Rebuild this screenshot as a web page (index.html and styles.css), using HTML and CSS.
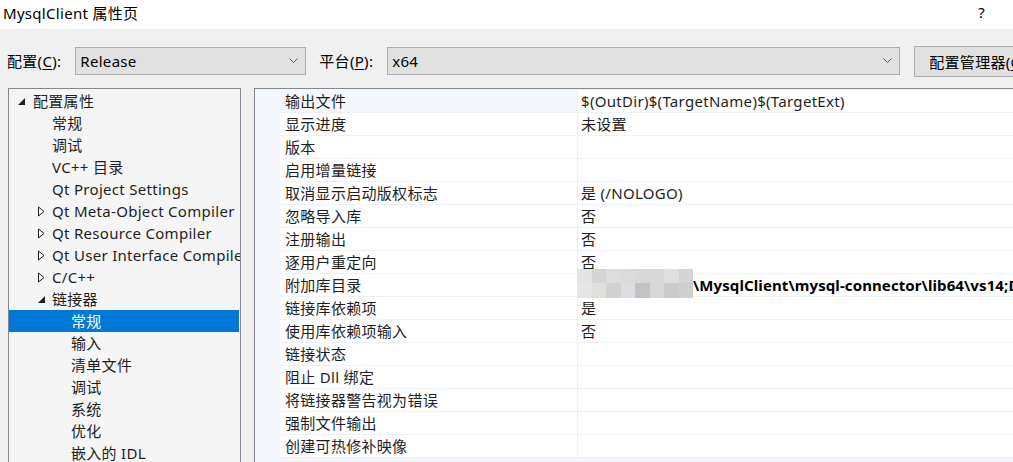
FILE: index.html
```html
<!DOCTYPE html>
<html lang="zh-CN">
<head>
<meta charset="utf-8">
<title>MysqlClient 属性页</title>
<link rel="stylesheet" href="styles.css">
</head>
<body>
<div class="dialog">
  <div class="titlebar">
    <span class="title">MysqlClient 属性页</span>
    <span class="help">?</span>
  </div>
  <div class="toolbar">
    <span class="label">配置(<u>C</u>):</span>
    <div class="combo combo-config"><span>Release</span><svg class="chev" width="9" height="6" viewBox="0 0 9 6"><path d="M0.5 0.5 L4.5 4.5 L8.5 0.5" fill="none" stroke="#555" stroke-width="1"/></svg></div>
    <span class="label label-platform">平台(<u>P</u>):</span>
    <div class="combo combo-platform"><span>x64</span><svg class="chev" width="9" height="6" viewBox="0 0 9 6"><path d="M0.5 0.5 L4.5 4.5 L8.5 0.5" fill="none" stroke="#555" stroke-width="1"/></svg></div>
    <div class="button">配置管理器(<u>O</u>)...</div>
  </div>
  <div class="main">
    <div class="tree">
      <div class="node l0"><svg class="exp" width="9" height="9" viewBox="0 0 9 9"><path d="M8 1 L8 8 L1 8 Z" fill="#1e1e1e"/></svg>配置属性</div>
      <div class="node l1"><span class="noexp"></span>常规</div>
      <div class="node l1"><span class="noexp"></span>调试</div>
      <div class="node l1"><span class="noexp"></span>VC++ 目录</div>
      <div class="node l1"><span class="noexp"></span>Qt Project Settings</div>
      <div class="node l1"><svg class="exp" width="9" height="11" viewBox="0 0 9 11"><path d="M1.5 1 L7 5.5 L1.5 10 Z" fill="none" stroke="#1e1e1e" stroke-width="1"/></svg>Qt Meta-Object Compiler</div>
      <div class="node l1"><svg class="exp" width="9" height="11" viewBox="0 0 9 11"><path d="M1.5 1 L7 5.5 L1.5 10 Z" fill="none" stroke="#1e1e1e" stroke-width="1"/></svg>Qt Resource Compiler</div>
      <div class="node l1"><svg class="exp" width="9" height="11" viewBox="0 0 9 11"><path d="M1.5 1 L7 5.5 L1.5 10 Z" fill="none" stroke="#1e1e1e" stroke-width="1"/></svg>Qt User Interface Compiler</div>
      <div class="node l1"><svg class="exp" width="9" height="11" viewBox="0 0 9 11"><path d="M1.5 1 L7 5.5 L1.5 10 Z" fill="none" stroke="#1e1e1e" stroke-width="1"/></svg>C/C++</div>
      <div class="node l1"><svg class="exp" width="9" height="9" viewBox="0 0 9 9"><path d="M8 1 L8 8 L1 8 Z" fill="#1e1e1e"/></svg>链接器</div>
      <div class="node l2 selected"><span class="noexp"></span>常规</div>
      <div class="node l2"><span class="noexp"></span>输入</div>
      <div class="node l2"><span class="noexp"></span>清单文件</div>
      <div class="node l2"><span class="noexp"></span>调试</div>
      <div class="node l2"><span class="noexp"></span>系统</div>
      <div class="node l2"><span class="noexp"></span>优化</div>
      <div class="node l2"><span class="noexp"></span>嵌入的 IDL</div>
    </div>
    <div class="grid">
      <div class="row current"><div class="name">输出文件</div><div class="value">$(OutDir)$(TargetName)$(TargetExt)</div></div>
      <div class="row"><div class="name">显示进度</div><div class="value">未设置</div></div>
      <div class="row"><div class="name">版本</div><div class="value"></div></div>
      <div class="row"><div class="name">启用增量链接</div><div class="value"></div></div>
      <div class="row"><div class="name">取消显示启动版权标志</div><div class="value">是 (/NOLOGO)</div></div>
      <div class="row"><div class="name">忽略导入库</div><div class="value">否</div></div>
      <div class="row"><div class="name">注册输出</div><div class="value">否</div></div>
      <div class="row"><div class="name">逐用户重定向</div><div class="value">否</div></div>
      <div class="row"><div class="name">附加库目录</div><div class="value blurred"><div class="blur"><i style="background:#e3e3e3"></i><i style="background:#d2d4d6"></i><i style="background:#dcdcdc"></i><i style="background:#dadada"></i><i style="background:#d8d8d8"></i><i style="background:#d6d8da"></i><i style="background:#dfdfdf"></i><i style="background:#d4d4d4"></i><i style="background:#e6e6e6"></i><i style="background:#e0dedb"></i><i style="background:#d0d1d3"></i><i style="background:#dcdde0"></i><i style="background:#c2c2c2"></i><i style="background:#d6d7d8"></i><i style="background:#cacbcd"></i><i style="background:#cfcfcf"></i></div><b>\MysqlClient\mysql-connector\lib64\vs14;D:\</b></div></div>
      <div class="row"><div class="name">链接库依赖项</div><div class="value">是</div></div>
      <div class="row"><div class="name">使用库依赖项输入</div><div class="value">否</div></div>
      <div class="row"><div class="name">链接状态</div><div class="value"></div></div>
      <div class="row"><div class="name">阻止 Dll 绑定</div><div class="value"></div></div>
      <div class="row"><div class="name">将链接器警告视为错误</div><div class="value"></div></div>
      <div class="row"><div class="name">强制文件输出</div><div class="value"></div></div>
      <div class="row"><div class="name">创建可热修补映像</div><div class="value"></div></div>
    </div>
  </div>
</div>
</body>
</html>
```
FILE: styles.css
```css
* { box-sizing: border-box; }
html, body {
  margin: 0;
  padding: 0;
  width: 1013px;
  height: 462px;
  overflow: hidden;
  background: #f0f0f0;
}
body {
  font-family: "Noto Sans", "Noto Sans CJK SC", sans-serif;
  font-size: 15px;
  letter-spacing: 0.3px;
  color: #1e1e1e;
}
.dialog {
  display: flex;
  flex-direction: column;
  width: 1013px;
  height: 462px;
}
.titlebar {
  height: 29px;
  background: #ffffff;
  display: flex;
  align-items: center;
  justify-content: space-between;
  padding: 0 28px 0 3px;
  flex: none;
}
.title { color: #000; font-size: 15px; line-height: 20px; margin-top: -3px; }
.help { color: #000; font-size: 15px; margin-top: -5px; }
.toolbar {
  display: flex;
  align-items: flex-start;
  padding: 18px 0 0 7px;
  height: 46px;
  flex: none;
  white-space: nowrap;
  overflow: visible;
}
.toolbar .label { line-height: 28px; color: #000; }
.toolbar u { text-decoration-thickness: 1px; text-underline-offset: 2px; }
.combo {
  height: 28px;
  background: #e1e1e1;
  border: 1px solid #adadad;
  display: flex;
  align-items: center;
  justify-content: space-between;
  padding: 0 7px 0 4px;
  color: #000;
  flex: none;
}
.combo-config { width: 231px; margin-left: 14px; }
.label-platform { margin-left: 13px; }
.combo-platform { width: 513px; margin-left: 14px; }
.chev { display: block; }
.button {
  height: 31px;
  margin-left: 14px;
  margin-top: -1px;
  border: 1px solid #adadad;
  background: #e1e1e1;
  display: flex;
  align-items: center;
  padding: 0 0 0 14px;
  width: 140px;
  color: #000;
  overflow: hidden;
  flex: none;
}
.main {
  display: flex;
  gap: 13px;
  padding-left: 8px;
  margin-top: 13px;
  flex: 1;
  min-height: 0;
}
.tree {
  width: 233px;
  flex: none;
  border: 1px solid #828790;
  border-bottom: none;
  background: #f5f5f5;
  padding-top: 1px;
  overflow: hidden;
}
.node {
  height: 22px;
  line-height: 22px;
  display: flex;
  align-items: center;
  white-space: nowrap;
  color: #1e1e1e;
}
.node .exp, .node .noexp { width: 9px; flex: none; margin-right: 7px; }
.node.l0 { padding-left: 8px; }
.node.l1 { padding-left: 28px; }
.node.l2 { padding-left: 47px; }
.node.l1 .exp, .node.l1 .noexp, .node.l2 .noexp { margin-right: 6px; }
.node.selected { background: #0078d7; color: #ffffff; margin-right: 1px; }
.grid {
  flex: 1;
  border-left: 1px solid #828790;
  border-top: 1px solid #828790;
  background: #f4f7fc;
  padding-left: 25px;
  padding-top: 1px;
  overflow: hidden;
  min-width: 0;
}
.row {
  display: flex;
  height: 23px;
  border-bottom: 1px solid #eef1f6;
  background: #ffffff;
  white-space: nowrap;
}
.row .name {
  width: 298px;
  flex: none;
  padding-left: 5px;
  line-height: 22px;
  border-right: 1px solid #eef1f6;
  color: #1e1e1e;
}
.row.current .name { background: #f4f7fc; }
.row .value {
  flex: 1;
  padding-left: 3px;
  line-height: 22px;
  color: #1e1e1e;
  position: relative;
  overflow: visible;
}
.value.blurred { padding-left: 115px; }
.value.blurred b { font-weight: bold; color: #000; letter-spacing: 0.1px; }
.blur {
  position: absolute;
  left: -1px;
  top: -5px;
  width: 116px;
  height: 29px;
  display: grid;
  grid-template-columns: repeat(8, 1fr);
  grid-template-rows: 14px 15px;
}
.blur i { display: block; }
```
